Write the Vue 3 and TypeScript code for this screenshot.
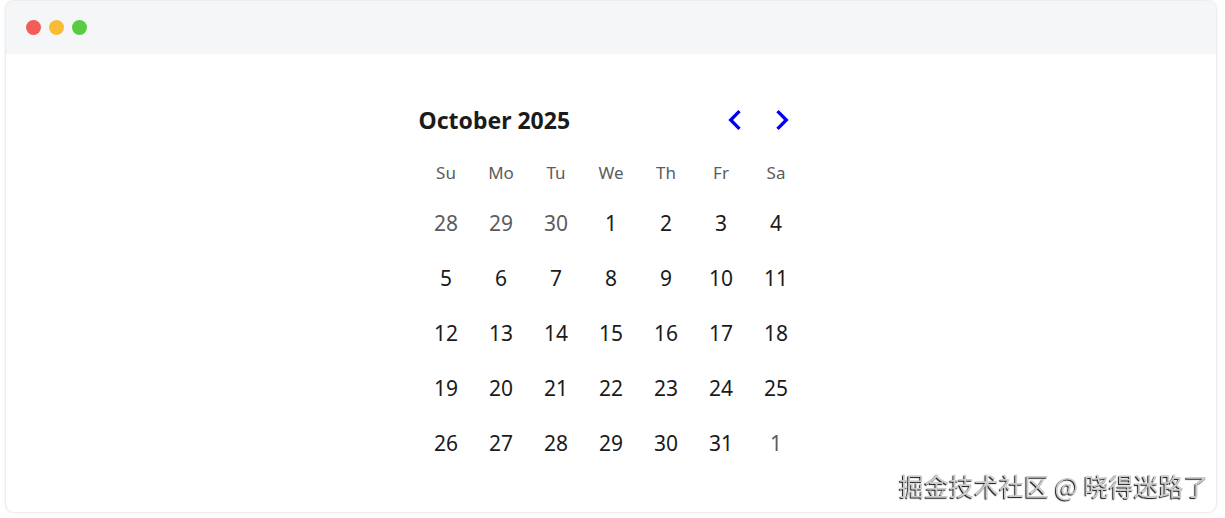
<script setup lang="ts">
import { computed, ref } from 'vue'

interface DayCell {
  key: string
  day: number
  outside: boolean
}

const names = ['Su', 'Mo', 'Tu', 'We', 'Th', 'Fr', 'Sa']
const months = [
  'January', 'February', 'March', 'April', 'May', 'June',
  'July', 'August', 'September', 'October', 'November', 'December',
]

const shown = ref(new Date(2025, 9, 1))
const title = computed(() => `${months[shown.value.getMonth()]} ${shown.value.getFullYear()}`)

const weeks = computed<DayCell[][]>(() => {
  const year = shown.value.getFullYear()
  const month = shown.value.getMonth()
  const lead = shown.value.getDay()
  const length = new Date(year, month + 1, 0).getDate()
  return Array.from({ length: Math.ceil((lead + length) / 7) }, (_, w) =>
    names.map((name, d) => {
      const date = new Date(year, month, w * 7 + d + 1 - lead)
      return { key: name, day: date.getDate(), outside: date.getMonth() !== month }
    }),
  )
})

function move(step: number) {
  shown.value = new Date(shown.value.getFullYear(), shown.value.getMonth() + step, 1)
}
</script>

<template>
  <main class="page">
    <section class="window">
      <header class="bar">
        <span class="dot red"></span>
        <span class="dot amber"></span>
        <span class="dot green"></span>
      </header>
      <div class="content">
        <div class="calendar">
          <div class="heading">
            <h1 class="title">{{ title }}</h1>
            <button class="nav" type="button" aria-label="Previous month" @click="move(-1)">
              <svg viewBox="0 0 24 24" aria-hidden="true"><path d="M15.41 7.41 14 6l-6 6 6 6 1.41-1.41L10.83 12z" /></svg>
            </button>
            <button class="nav" type="button" aria-label="Next month" @click="move(1)">
              <svg viewBox="0 0 24 24" aria-hidden="true"><path d="M10 6 8.59 7.41 13.17 12l-4.58 4.59L10 18l6-6z" /></svg>
            </button>
          </div>
          <table class="month">
            <thead>
              <tr>
                <th v-for="name in names" :key="name" scope="col">{{ name }}</th>
              </tr>
            </thead>
            <tbody>
              <tr v-for="(week, i) in weeks" :key="i">
                <td v-for="cell in week" :key="cell.key" :class="{ outside: cell.outside }">{{ cell.day }}</td>
              </tr>
            </tbody>
          </table>
        </div>
      </div>
      <p class="credit">掘金技术社区 @ 晓得迷路了</p>
    </section>
  </main>
</template>

<style>
body {
  background: #fff;
}
</style>

<style scoped>
.page {
  padding: 1px 9px 6px 6px;
  font-family: "Noto Sans", "Noto Sans CJK SC", sans-serif;
  color: #1b1b1b;
}

.window {
  position: relative;
  border-radius: 8px;
  background: #fff;
  box-shadow: 0 0 3px rgba(0, 0, 0, 0.2);
}

.bar {
  display: flex;
  align-items: center;
  gap: 8px;
  height: 53px;
  padding: 0 20px;
  border-radius: 8px 8px 0 0;
  background: #f4f6f8;
}

.dot {
  width: 15px;
  height: 15px;
  border-radius: 50%;
}

.red {
  background: #f45c57;
}

.amber {
  background: #fabc37;
}

.green {
  background: #59cb41;
}

.content {
  display: flex;
  justify-content: center;
  padding: 45px 0 42px;
}

.calendar {
  width: 385px;
}

.heading {
  display: flex;
  align-items: center;
  gap: 7px;
  height: 42px;
  padding-right: 2px;
}

.title {
  flex: 1;
  margin: 0;
  font-size: 23px;
  line-height: 32px;
  font-weight: 700;
}

.nav {
  width: 40px;
  height: 40px;
  padding: 0;
  border: 0;
  background: none;
  color: #0000ee;
  cursor: pointer;
}

.nav svg {
  display: block;
  width: 40px;
  height: 40px;
  fill: currentColor;
}

.month {
  width: 100%;
  margin-top: 8px;
  table-layout: fixed;
  border-collapse: collapse;
}

th,
td {
  padding: 0;
  text-align: center;
  font-weight: 400;
}

th {
  height: 46px;
  font-size: 17px;
  color: #5c5c5c;
}

td {
  height: 55px;
  font-size: 21px;
}

.outside {
  color: #5c5c5c;
}

.credit {
  position: absolute;
  right: 7px;
  bottom: 9px;
  margin: 0;
  font-family: "Noto Sans CJK SC", sans-serif;
  font-size: 25px;
  line-height: 36px;
  color: #cccccc;
  text-shadow: -1px 1px 1px #111;
  will-change: transform;
}
</style>
